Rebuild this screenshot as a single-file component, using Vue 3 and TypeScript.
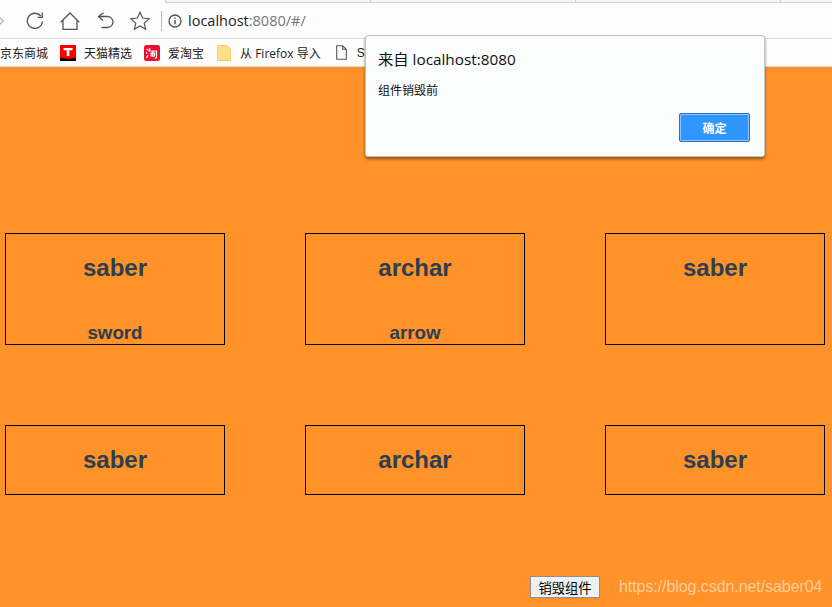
<script setup lang="ts">
interface Card { title: string; sub?: string; tall: boolean }
const cards: Card[] = [
  { title: 'saber', sub: 'sword', tall: true },
  { title: 'archar', sub: 'arrow', tall: true },
  { title: 'saber', tall: true },
  { title: 'saber', tall: false },
  { title: 'archar', tall: false },
  { title: 'saber', tall: false },
]
</script>

<template>
  <div class="window">
    <div class="tabs">
      <div class="tab-gap"></div>
      <div class="tab"></div>
      <div class="tab"></div>
      <div class="tab"></div>
      <div class="tab"></div>
    </div>
    <div class="toolbar">
      <svg class="ico chev" width="6" height="10" viewBox="0 0 6 10"><path d="M-1 1 3.500 5-1 9" fill="none" stroke="#b4b4b4" stroke-width="1.300"/></svg>
      <svg class="ico reload" width="18" height="18" viewBox="0 0 18 18"><path d="M14.800 4A7.600 7.600 0 1 0 16.500 9.500" fill="none" stroke="#555" stroke-width="1.300"/><path d="M16.300 .5v4.800h-4.800" fill="none" stroke="#555" stroke-width="1.300"/></svg>
      <svg class="ico home" width="20" height="18" viewBox="0 0 20 18"><path d="M.7 10.300 10 1l9.300 9.300M3 8v9.300h14V8" fill="none" stroke="#555" stroke-width="1.300"/></svg>
      <svg class="ico undo" width="17" height="17" viewBox="0 0 17 17"><path d="M6.500 .7 1.500 4.500l4.500 4M1.500 4.500H10.500a5.500 5.500 0 0 1 0 11H4.500" fill="none" stroke="#555" stroke-width="1.300"/></svg>
      <svg class="ico star" width="20" height="19" viewBox="0 0 20 19"><path d="m10 1.200 2.600 5.800 6.600.7-5 4.400 1.500 6.200L10 15l-5.700 3.300 1.500-6.200-5-4.400L7.400 7z" fill="none" stroke="#555" stroke-width="1.200"/></svg>
      <div class="divider"></div>
      <svg class="ico info" width="14" height="14" viewBox="0 0 14 14"><circle cx="7" cy="7" r="6" fill="none" stroke="#555" stroke-width="1.300"/><path d="M7 6v4.300M7 3.400v1.400" stroke="#555" stroke-width="1.500"/></svg>
      <span class="url">localhost<span class="url-dim">:8080/#/</span></span>
    </div>
    <div class="bookmarks">
      <span class="bm first">京东商城</span>
      <svg class="bm-ico" width="16" height="16" viewBox="0 0 16 16"><rect width="16" height="16" fill="#f00"/><path d="M0 12.500q8 2.500 16 0V16H0z" fill="#000"/><path d="M3.500 3h9v2.300H9.300V11H6.700V5.300H3.500z" fill="#fff"/></svg>
      <span class="bm second">天猫精选</span>
      <svg class="bm-ico" width="16" height="16" viewBox="0 0 16 16"><rect width="16" height="16" rx="2.500" fill="#e8112d"/><path d="M2.500 4l1.500 1M2 7.500l1.500 1M2.500 13 4 10M6 3 5 6h7.500v6.500l-1.500 1M7 8h3.500v3H7zM8.800 6v6" fill="none" stroke="#fff" stroke-width="1.200"/></svg>
      <span class="bm third">爱淘宝</span>
      <svg class="bm-ico" width="14" height="16" viewBox="0 0 14 16"><path d="M.5.500h9.500l3.500 3.500v11.500H.5z" fill="#fde08a" stroke="#f2cf6e"/></svg>
      <span class="bm fourth">从 Firefox 导入</span>
      <svg class="bm-ico" width="11" height="15" viewBox="0 0 11 15"><path d="M.7.700h6l3.600 3.600v10H.7zM6.700.700v3.600h3.600" fill="#fff" stroke="#555" stroke-width="1.100"/></svg>
      <span class="bm fifth">S</span>
    </div>
    <main class="page">
      <div class="grid">
        <section v-for="(c, i) in cards" :key="i" class="card" :class="{ tall: c.tall }">
          <h2>{{ c.title }}</h2>
          <h3 v-if="c.sub">{{ c.sub }}</h3>
        </section>
      </div>
      <footer class="foot">
        <button class="destroy" type="button">销毁组件</button>
        <span class="mark">https://blog.csdn.net/saber04</span>
      </footer>
    </main>
    <div class="alert">
      <div class="alert-title">来自 localhost:8080</div>
      <div class="alert-msg">组件销毁前</div>
      <div class="alert-actions"><button class="ok" type="button">确定</button></div>
    </div>
  </div>
</template>

<style scoped>
.window {
  position: relative;
  width: 832px;
  height: 607px;
  overflow: hidden;
  display: flex;
  flex-direction: column;
  background: #fdfdfd;
  font-family: "Liberation Sans", "Noto Sans CJK SC", sans-serif;
}
.tabs {
  height: 3px;
  display: flex;
  flex: none;
}
.tab-gap { width: 165px; flex: none; }
.tab {
  width: 205px;
  flex: none;
  box-sizing: border-box;
  border-left: 1px solid #d0d0d0;
  border-bottom: 1px solid #d0d0d0;
  background: #f6f6f6;
}
.toolbar {
  height: 35px;
  flex: none;
  display: flex;
  align-items: center;
  border-bottom: 1px solid #dcdcdc;
  background: #fdfdfd;
}
.ico { flex: none; }
.chev { margin-right: 20px; }
.reload { margin-right: 16px; }
.home { margin-right: 17px; }
.undo { margin-right: 16px; }
.star { margin-right: 11px; }
.divider { width: 1px; height: 20px; background: #bbb; margin-right: 6px; }
.info { margin-right: 6px; }
.url { font-size: 14.500px; color: #222; font-family: "Open Sans", "Liberation Sans", sans-serif; }
.url-dim { color: #777; }
.bookmarks {
  height: 28px;
  flex: none;
  display: flex;
  align-items: center;
  background: #fdfdfd;
  border-bottom: 1px solid #d9d9d9;
  box-sizing: border-box;
  font-size: 12px;
  color: #222;
  white-space: nowrap;
}
.bm-ico { flex: none; }
.first { margin-left: 0; margin-right: 12px; }
.second { margin-left: 8px; margin-right: 12px; }
.third { margin-left: 8px; margin-right: 13px; }
.fourth { margin-left: 9px; margin-right: 15px; font-family: "Open Sans", "Noto Sans CJK SC", sans-serif; }
.fifth { margin-left: 10px; }
.page {
  flex: 1;
  min-height: 0;
  background: #ff9228;
  color: #2c3e50;
  display: flex;
  flex-direction: column;
}
.grid {
  margin: 166px 0 0 5px;
  display: grid;
  grid-template-columns: repeat(3, 220px);
  column-gap: 80px;
  row-gap: 80px;
}
.card {
  height: 70px;
  box-sizing: border-box;
  border: 1px solid #000;
  text-align: center;
  overflow: hidden;
}
.card.tall { height: 112px; }
.card h2 {
  margin: 20px 0 0;
  font-size: 24px;
  line-height: 28px;
  font-weight: 700;
}
.card h3 {
  margin: 40px 0 0;
  font-size: 18.720px;
  line-height: 22px;
  font-weight: 700;
}
.foot {
  margin-top: auto;
  padding: 0 0 9px 530px;
  display: flex;
  align-items: center;
  gap: 19px;
}
.destroy {
  width: 70px;
  height: 22px;
  flex: none;
  padding: 0;
  background: #f0f0f0;
  border: 1px solid #8f8f8f;
  font: 13.300px "Noto Sans CJK SC", sans-serif;
  color: #000;
}
.mark {
  font-size: 16px;
  letter-spacing: -0.07px;
  color: rgba(255, 255, 255, 0.55);
  white-space: nowrap;
}
.alert {
  position: absolute;
  left: 365px;
  top: 35px;
  width: 400px;
  height: 122px;
  box-sizing: border-box;
  padding: 13px 12px;
  background: #fbfcfc;
  border: 1px solid #c4c4c4;
  border-radius: 3px;
  box-shadow: 0 2px 3px rgba(90, 50, 10, 0.65);
  color: #111;
}
.alert-title {
  font-size: 15.300px;
  line-height: 20px;
  font-family: "Open Sans", "Noto Sans CJK SC", sans-serif;
}
.alert-msg {
  margin-top: 14px;
  font-size: 12px;
  line-height: 16px;
}
.alert-actions {
  display: flex;
  justify-content: flex-end;
  margin-top: 14px;
  margin-right: 2px;
}
.ok {
  width: 71px;
  height: 29px;
  flex: none;
  padding: 0;
  background: #3096ff;
  border: 1px solid #2a6fc0;
  border-radius: 2px;
  box-shadow: inset 0 0 0 1px #8cc4ff;
  color: #fff;
  font: 700 12px "Noto Sans CJK SC", sans-serif;
}
</style>
